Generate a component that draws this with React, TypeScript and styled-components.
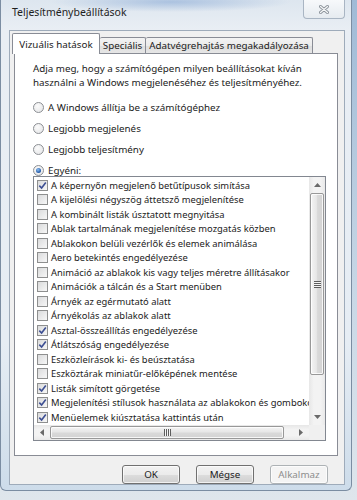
import React from "react";
import styled, { createGlobalStyle } from "styled-components";

const GlobalStyle = createGlobalStyle`
  html, body { margin: 0; padding: 0; }
  body {
    width: 357px;
    height: 500px;
    overflow: hidden;
    background: linear-gradient(180deg, #9fbad6 0%, #c9d8e6 60%, #dfe6ec 100%);
    font-family: "Noto Sans", "Open Sans", sans-serif;
    color: #1b1b1b;
  }
`;

const Window = styled.div`
  box-sizing: border-box;
  width: 352px;
  height: 491px;
  display: flex;
  flex-direction: column;
  padding: 0 6px 5px 8px;
  border: 1px solid #7b8da2;
  border-top: none;
  border-radius: 0 0 6px 6px;
  background:
    radial-gradient(ellipse 120px 10px at 170px 2px, rgba(110, 150, 205, 0.45), transparent),
    linear-gradient(180deg, #dde6ef 0%, #e9eef4 6%, #e6edf4 70%, #cddcea 100%);
`;

const TitleBar = styled.div`
  height: 30px;
  display: flex;
  align-items: flex-start;
`;

const Title = styled.span`
  padding: 5px 0 0 3px;
  font-size: 10.5px;
  color: #1e1e1e;
`;

const CloseButton = styled.div`
  margin-left: auto;
  width: 42px;
  height: 19px;
  box-sizing: border-box;
  display: flex;
  align-items: center;
  justify-content: center;
  border: 1px solid #a9b5c3;
  border-top: none;
  border-radius: 0 0 4px 4px;
  background: linear-gradient(180deg, #f7f9fb, #e6ebf0);
`;

const Client = styled.div`
  flex: 1;
  display: flex;
  flex-direction: column;
  padding: 2px 6px 0 4px;
  background: #f0f0f0;
  border: 1px solid #9eabba;
`;

const TabStrip = styled.div`
  height: 20px;
  display: flex;
  align-items: flex-end;
`;

const Tab = styled.div<{ $selected?: boolean; $w: number }>`
  box-sizing: border-box;
  width: ${(p) => p.$w}px;
  height: ${(p) => (p.$selected ? 21 : 16)}px;
  margin-left: ${(p) => (p.$selected ? -2 : 0)}px;
  margin-bottom: ${(p) => (p.$selected ? -1 : 0)}px;
  position: relative;
  z-index: ${(p) => (p.$selected ? 1 : 0)};
  display: flex;
  align-items: center;
  justify-content: center;
  padding-top: ${(p) => (p.$selected ? 1 : 0)}px;
  font-size: 9.8px;
  white-space: nowrap;
  border: 1px solid #898c95;
  border-bottom: none;
  border-left: ${(p) => (p.$selected ? "1px solid #898c95" : "none")};
  border-radius: 2px 2px 0 0;
  background: ${(p) =>
    p.$selected ? "#ffffff" : "linear-gradient(180deg, #f3f3f3 0%, #ebebeb 50%, #dedede 51%, #e6e6e6 100%)"};
  &:first-child { border-left: 1px solid #898c95; }
`;

const Panel = styled.div`
  box-sizing: border-box;
  height: 403px;
  padding: 8px 12px 0 18px;
  background: #ffffff;
  border: 1px solid #898c95;
  display: flex;
  flex-direction: column;
`;

const Description = styled.p`
  margin: 0;
  font-size: 9.8px;
  line-height: 14px;
`;

const RadioGroup = styled.div`
  margin-top: 11px;
  display: flex;
  flex-direction: column;
  gap: 9px;
`;

const RadioRow = styled.label`
  height: 12px;
  display: flex;
  align-items: center;
  gap: 4px;
  font-size: 9.8px;
  white-space: nowrap;
`;

const RadioCircle = styled.span<{ $checked?: boolean }>`
  box-sizing: border-box;
  width: 11px;
  height: 11px;
  border-radius: 50%;
  border: 1px solid #8c8f94;
  background: radial-gradient(circle at 40% 35%, #fbfbfb, #e2e3e5);
  display: flex;
  align-items: center;
  justify-content: center;
  &::after {
    content: "";
    display: ${(p) => (p.$checked ? "block" : "none")};
    width: 5px;
    height: 5px;
    border-radius: 50%;
    background: radial-gradient(circle at 40% 35%, #8ec0f2, #1f56a6 70%);
  }
`;

const ListBox = styled.div`
  box-sizing: border-box;
  width: 293px;
  height: 265px;
  border: 1px solid #828790;
  display: grid;
  grid-template-columns: 1fr 16px;
  grid-template-rows: 1fr 15px;
  background: #ffffff;
`;

const Items = styled.div`
  overflow: hidden;
  padding-top: 1px;
`;

const Row = styled.div`
  height: 14.5px;
  display: flex;
  align-items: center;
  gap: 3px;
  padding-left: 3px;
  font-size: 9.4px;
  white-space: nowrap;
`;

const Check = styled.span`
  flex: 0 0 auto;
  box-sizing: border-box;
  width: 11px;
  height: 11px;
  border: 1px solid #8e8f8f;
  background: linear-gradient(135deg, #dadbdc, #f7f7f7);
  display: flex;
  align-items: center;
  justify-content: center;
`;

const VScroll = styled.div`
  display: flex;
  flex-direction: column;
  background: linear-gradient(90deg, #e7e7e7, #f3f3f3 30%, #f3f3f3 70%, #e9e9e9);
`;

const HScroll = styled.div`
  display: flex;
  background: linear-gradient(180deg, #e7e7e7, #f3f3f3 30%, #f3f3f3 70%, #e9e9e9);
`;

const Corner = styled.div`
  background: #f0f0f0;
`;

const Arrow = styled.div<{ $v?: boolean }>`
  flex: 0 0 auto;
  width: ${(p) => (p.$v ? "auto" : "16px")};
  height: ${(p) => (p.$v ? "16px" : "auto")};
  display: flex;
  align-items: center;
  justify-content: center;
`;

const Track = styled.div<{ $v?: boolean }>`
  flex: 1;
  display: flex;
  flex-direction: ${(p) => (p.$v ? "column" : "row")};
`;

const Thumb = styled.div<{ $v?: boolean; $len: number }>`
  box-sizing: border-box;
  ${(p) => (p.$v ? `height: ${p.$len}px; margin: 0 1px;` : `width: ${p.$len}px; margin: 1px 0;`)}
  border: 1px solid #989898;
  border-radius: 2px;
  box-shadow: inset 0 0 0 1px rgba(255, 255, 255, 0.8);
  background: linear-gradient(${(p) => (p.$v ? "90deg" : "180deg")}, #f4f4f4, #e7e7e7 45%, #d9d9d9 55%, #d3d3d3);
  display: flex;
  align-items: center;
  justify-content: center;
`;

const Grip = styled.div<{ $v?: boolean }>`
  width: 7px;
  height: 7px;
  background: repeating-linear-gradient(
    ${(p) => (p.$v ? "180deg" : "90deg")},
    #5d5d5d 0 1px,
    #f4f4f4 1px 2px
  );
`;

const Buttons = styled.div`
  margin-top: 9px;
  padding-right: 10px;
  display: flex;
  justify-content: flex-end;
  gap: 16px;
`;

const Button = styled.div<{ $disabled?: boolean }>`
  box-sizing: border-box;
  width: 58px;
  height: 19px;
  display: flex;
  align-items: center;
  justify-content: center;
  font-size: 9.8px;
  border-radius: 3px;
  border: 1px solid ${(p) => (p.$disabled ? "#adb2b5" : "#707070")};
  color: ${(p) => (p.$disabled ? "#8d8d8d" : "#1b1b1b")};
  background: ${(p) =>
    p.$disabled
      ? "#f4f4f4"
      : "linear-gradient(180deg, #f2f2f2 0%, #ebebeb 50%, #dddddd 51%, #cfcfcf 100%)"};
  box-shadow: inset 0 0 0 1px rgba(255, 255, 255, 0.7);
`;

const effects: [string, boolean][] = [
  ["A képernyőn megjelenő betűtípusok simítása", true],
  ["A kijelölési négyszög áttetsző megjelenítése", false],
  ["A kombinált listák úsztatott megnyitása", false],
  ["Ablak tartalmának megjelenítése mozgatás közben", false],
  ["Ablakokon belüli vezérlők és elemek animálása", false],
  ["Aero betekintés engedélyezése", false],
  ["Animáció az ablakok kis vagy teljes méretre állításakor", false],
  ["Animációk a tálcán és a Start menüben", false],
  ["Árnyék az egérmutató alatt", false],
  ["Árnyékolás az ablakok alatt", false],
  ["Asztal-összeállítás engedélyezése", true],
  ["Átlátszóság engedélyezése", true],
  ["Eszközleírások ki- és beúsztatása", false],
  ["Eszköztárak miniatűr-előképének mentése", false],
  ["Listák simított görgetése", true],
  ["Megjelenítési stílusok használata az ablakokon és gombokon", true],
  ["Menüelemek kiúsztatása kattintás után", true],
];

const radios = [
  "A Windows állítja be a számítógéphez",
  "Legjobb megjelenés",
  "Legjobb teljesítmény",
  "Egyéni:",
];

const Tri = ({ dir }: { dir: "up" | "down" | "left" | "right" }) => {
  const pts = {
    up: "0,4 3.5,0 7,4",
    down: "0,0 7,0 3.5,4",
    left: "4,0 4,7 0,3.5",
    right: "0,0 0,7 4,3.5",
  }[dir];
  const v = dir === "up" || dir === "down";
  return (
    <svg width={v ? 7 : 4} height={v ? 4 : 7} viewBox={v ? "0 0 7 4" : "0 0 4 7"}>
      <polygon points={pts} fill="#6a6a6a" />
    </svg>
  );
};

export default function App() {
  return (
    <>
      <GlobalStyle />
      <Window>
        <TitleBar>
          <Title>Teljesítménybeállítások</Title>
          <CloseButton>
            <svg width="10" height="9" viewBox="0 0 10 9">
              <path d="M1.5 1.5 L8.5 7.5 M8.5 1.5 L1.5 7.5" stroke="#8d949c" strokeWidth="3" strokeLinecap="round" />
              <path d="M1.5 1.5 L8.5 7.5 M8.5 1.5 L1.5 7.5" stroke="#f6f7f8" strokeWidth="1.2" strokeLinecap="round" />
            </svg>
          </CloseButton>
        </TitleBar>
        <Client>
          <TabStrip>
            <Tab $selected $w={88}>Vizuális hatások</Tab>
            <Tab $w={46}>Speciális</Tab>
            <Tab $w={167}>Adatvégrehajtás megakadályozása</Tab>
          </TabStrip>
          <Panel>
            <Description>
              Adja meg, hogy a számítógépen milyen beállításokat kíván
              <br />
              használni a Windows megjelenéséhez és teljesítményéhez.
            </Description>
            <RadioGroup>
              {radios.map((r, i) => (
                <RadioRow key={r}>
                  <RadioCircle $checked={i === 3} />
                  {r}
                </RadioRow>
              ))}
            </RadioGroup>
            <ListBox>
              <Items>
                {effects.map(([label, on]) => (
                  <Row key={label}>
                    <Check>
                      {on && (
                        <svg width="9" height="9" viewBox="0 0 9 9">
                          <path d="M1.3 4.6 L3.6 7 L7.8 1.4" fill="none" stroke="#3d4f93" strokeWidth="1.6" />
                        </svg>
                      )}
                    </Check>
                    {label}
                  </Row>
                ))}
              </Items>
              <VScroll>
                <Arrow $v><Tri dir="up" /></Arrow>
                <Track $v>
                  <Thumb $v $len={182}><Grip $v /></Thumb>
                </Track>
                <Arrow $v><Tri dir="down" /></Arrow>
              </VScroll>
              <HScroll>
                <Arrow><Tri dir="left" /></Arrow>
                <Track>
                  <Thumb $len={234}><Grip /></Thumb>
                </Track>
                <Arrow><Tri dir="right" /></Arrow>
              </HScroll>
              <Corner />
            </ListBox>
          </Panel>
          <Buttons>
            <Button>OK</Button>
            <Button>Mégse</Button>
            <Button $disabled>Alkalmaz</Button>
          </Buttons>
        </Client>
      </Window>
    </>
  );
}
